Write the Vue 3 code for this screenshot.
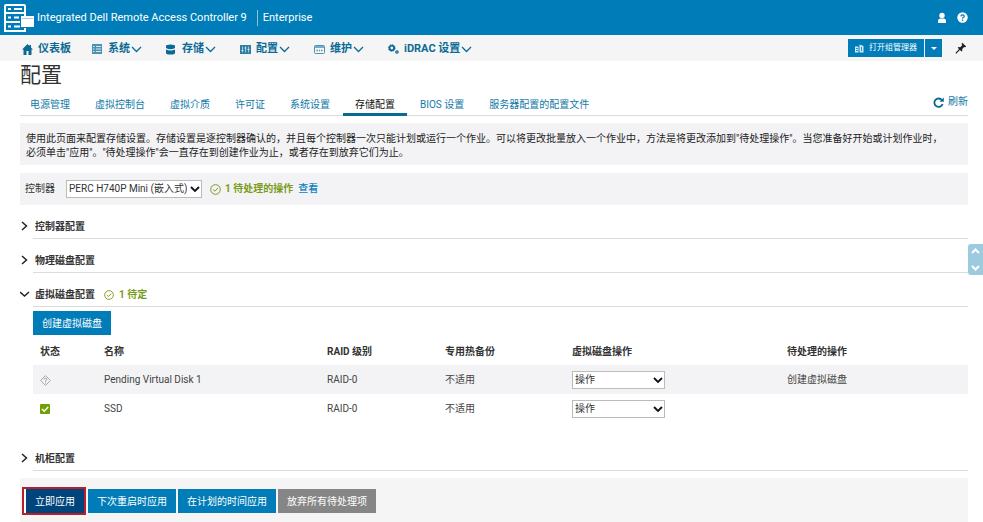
<script setup>
import { ref } from 'vue'

const navItems = [
  { id: 'home', label: '仪表板', menu: false },
  { id: 'system', label: '系统', menu: true },
  { id: 'storage', label: '存储', menu: true },
  { id: 'config', label: '配置', menu: true },
  { id: 'maintain', label: '维护', menu: true },
  { id: 'gears', label: 'iDRAC 设置', menu: true },
]

const tabs = [
  '电源管理', '虚拟控制台', '虚拟介质', '许可证', '系统设置',
  '存储配置', 'BIOS 设置', '服务器配置的配置文件',
]
const activeTab = ref('存储配置')

const disks = [
  { name: 'Pending Virtual Disk 1', raid: 'RAID-0', spare: '不适用', ok: false, pending: '创建虚拟磁盘' },
  { name: 'SSD', raid: 'RAID-0', spare: '不适用', ok: true, pending: '' },
]
</script>

<template>
  <div class="page">
    <header class="topbar">
      <svg class="logo" viewBox="0 0 30 28" aria-hidden="true">
        <g fill="none" stroke="#fff" stroke-width="2">
          <rect x="1" y="1" width="20" height="8" rx="1" />
          <path d="M21 12V9M1 9v9h15" />
          <path d="M1 18v9h20v-3M1 18h15" />
        </g>
        <path d="M4 5h3M10 5h8M4 13.500h3M10 13.500h5M4 22.500h3M10 22.500h6" stroke="#fff" stroke-width="2" />
        <rect x="17" y="12" width="13" height="11" fill="#fff" />
        <path d="M18 14.500h11" stroke="#9fd0e8" stroke-width="1" />
      </svg>
      <span class="product">Integrated Dell Remote Access Controller 9</span>
      <span class="edition">Enterprise</span>
      <div class="top-icons">
        <button type="button" class="plain" aria-label="用户">
          <svg width="10" height="12" viewBox="0 0 10 12" fill="#fff">
            <circle cx="5" cy="3.400" r="2.700" />
            <path d="M1 11V9.200Q1 6.600 3.500 6.600h3Q9 6.600 9 9.200V11z" />
          </svg>
        </button>
        <button type="button" class="plain" aria-label="帮助">
          <svg width="11" height="11" viewBox="0 0 11 11">
            <circle cx="5.500" cy="5.500" r="5.200" fill="#fff" />
            <path d="M3.900 4.400Q4 2.800 5.600 2.800T7.200 4.200Q7.200 5 6.200 5.500Q5.500 5.900 5.500 6.700" fill="none" stroke="#007db8" stroke-width="1.300" />
            <circle cx="5.500" cy="8.300" r=".8" fill="#007db8" />
          </svg>
        </button>
      </div>
    </header>

    <div class="navbar">
      <nav class="nav">
        <a v-for="item in navItems" :key="item.id" href="#" class="nav-item">
          <svg class="nav-icon" viewBox="0 0 11 11" aria-hidden="true">
            <path v-if="item.id === 'home'" fill="#0b6a94" d="M5.500 0L0 5.500h1.500V11h3V7h2v4h3V5.500H11L9 3.500V1H7.500v1z" />
            <g v-else-if="item.id === 'system'">
              <rect x="0" y="0" width="10" height="10" fill="#4c93b3" />
              <path d="M1 2.500h1.500M1 5h1.500M1 7.500h1.500M4 2.500h5M4 5h5M4 7.500h5" stroke="#fff" stroke-width=".8" />
            </g>
            <g v-else-if="item.id === 'storage'" fill="#0b6a94">
              <path d="M0 2Q0 .5 4.500 .5T9 2v2Q7 5.200 4.500 5.200T0 4z" />
              <path d="M0 5.400Q2 6.500 4.500 6.500T9 5.400V9q0 1.500-4.500 1.500T0 9z" />
            </g>
            <g v-else-if="item.id === 'config'">
              <rect x="0" y="1" width="11" height="9" fill="#2f7fa5" />
              <path d="M2.500 2.500v6M5.500 2.500v6M8.500 2.500v6" stroke="#b9d9e7" stroke-width=".8" />
              <path d="M1.500 6.500h2M4.500 4h2M7.500 5.500h2" stroke="#d8eaf2" />
            </g>
            <g v-else-if="item.id === 'maintain'" fill="none" stroke="#4c93b3">
              <rect x=".5" y="1.500" width="10" height="8" rx="1" />
              <path d="M1 3h9" stroke-width="1.500" />
              <path d="M2.500 6.500h1.500M5 6.500h1M7 6.500h1.500" stroke-width="1.500" />
            </g>
            <g v-else fill="none" stroke="#0b6a94">
              <circle cx="3.800" cy="4" r="2.300" stroke-width="1.800" />
              <circle cx="3.800" cy="4" r="3.300" stroke-width="1" stroke-dasharray="1.300 1.300" />
              <circle cx="9" cy="8" r="1.200" stroke-width="1.200" />
            </g>
          </svg>
          <span>{{ item.label }}</span>
          <svg v-if="item.menu" class="nav-caret" viewBox="0 0 11 7" aria-hidden="true">
            <path d="M1 1l4.500 4.500L10 1" fill="none" stroke="#0b6a94" stroke-width="1.300" />
          </svg>
        </a>
      </nav>
      <div class="nav-tools">
        <button type="button" class="group-btn">
          <svg width="9" height="9" viewBox="0 0 9 9" aria-hidden="true">
            <path d="M0 2.500h3.500v6H0zM4.500 .5L8.500 2v6.500h-4z" fill="#cfe8f3" />
            <path d="M1 4.500h2M1 6.500h2M6.500 3v4" stroke="#007db8" stroke-width=".8" />
          </svg>
          打开组管理器
        </button>
        <button type="button" class="group-more" aria-label="更多">
          <svg width="6" height="3" viewBox="0 0 6 3"><path d="M0 0h6L3 3z" fill="#fff" /></svg>
        </button>
        <button type="button" class="plain pin" aria-label="固定">
          <svg width="12" height="12" viewBox="0 0 12 12">
            <path d="M7.200 .8l4 3.800-1 .7-1-.2-2 2 .1 1.700-.8.700L2.700 5.800l.8-.8 1.800.2 2-2.200-.8-1.200z" fill="#222" />
            <path d="M5 7L.8 11.300" stroke="#222" stroke-width="1.100" />
          </svg>
        </button>
      </div>
    </div>

    <main class="content">
      <h1>配置</h1>
      <div class="tabbar">
        <a
          v-for="tab in tabs" :key="tab" href="#" class="tab"
          :class="{ active: tab === activeTab }" @click.prevent="activeTab = tab"
        >{{ tab }}</a>
        <a href="#" class="refresh">
          <svg width="11" height="11" viewBox="0 0 11 11" aria-hidden="true">
            <path d="M9 3.200A4.200 4.200 0 1 0 9.600 7" fill="none" stroke="#0b6a94" stroke-width="1.800" />
            <path d="M10.800 .6v4.200H6.600z" fill="#0b6a94" />
          </svg>
          刷新
        </a>
      </div>

      <p class="intro">使用此页面来配置存储设置。存储设置是逐控制器确认的，并且每个控制器一次只能计划或运行一个作业。可以将更改批量放入一个作业中，方法是将更改添加到"待处理操作"。当您准备好开始或计划作业时，必须单击"应用"。"待处理操作"会一直存在到创建作业为止，或者存在到放弃它们为止。</p>

      <div class="controller">
        <label for="controller">控制器</label>
        <span class="select wide">
          <select id="controller">
            <option>PERC H740P Mini (嵌入式)</option>
          </select>
          <svg viewBox="0 0 10 7" aria-hidden="true"><path d="M1 1l4 4 4-4" /></svg>
        </span>
        <svg class="check" viewBox="0 0 11 11" aria-hidden="true">
          <circle cx="5.500" cy="5.500" r="4.800" />
          <path d="M3.200 5.500l1.700 1.700 3-3.200" />
        </svg>
        <span class="pending">1 待处理的操作</span>
        <a href="#" class="view">查看</a>
      </div>

      <section class="section">
        <svg class="arrow" viewBox="0 0 10 10" aria-hidden="true"><path d="M2 1l4.500 4L2 9" /></svg>
        <h2>控制器配置</h2>
      </section>
      <section class="section">
        <svg class="arrow" viewBox="0 0 10 10" aria-hidden="true"><path d="M2 1l4.500 4L2 9" /></svg>
        <h2>物理磁盘配置</h2>
      </section>
      <section class="section">
        <svg class="arrow" viewBox="0 0 10 10" aria-hidden="true"><path d="M0 3l4.500 4L9 3" /></svg>
        <h2>
          虚拟磁盘配置
          <svg class="check small" viewBox="0 0 11 11" aria-hidden="true">
            <circle cx="5.500" cy="5.500" r="4.800" />
            <path d="M3.200 5.500l1.700 1.700 3-3.200" />
          </svg>
          <span class="count">1 待定</span>
        </h2>
      </section>

      <div class="disks">
        <button type="button" class="btn">创建虚拟磁盘</button>
        <table>
          <thead>
            <tr>
              <th class="c-state">状态</th>
              <th class="c-name">名称</th>
              <th class="c-raid">RAID 级别</th>
              <th class="c-spare">专用热备份</th>
              <th class="c-action">虚拟磁盘操作</th>
              <th>待处理的操作</th>
            </tr>
          </thead>
          <tbody>
            <tr v-for="disk in disks" :key="disk.name">
              <td>
                <svg v-if="disk.ok" class="state" viewBox="0 0 11 11" role="img" aria-label="正常">
                  <rect x="0" y="0" width="10" height="10" rx="1" fill="#6ea204" />
                  <path d="M2 5l2.200 2.200L8.200 3" fill="none" stroke="#fff" stroke-width="1.600" />
                </svg>
                <svg v-else class="state" viewBox="0 0 11 11" role="img" aria-label="未知">
                  <path d="M5.500 .6l4.900 4.900-4.900 4.900L.6 5.500z" fill="#f8f8f8" stroke="#a5a5a5" />
                  <path d="M4 4.500Q4.200 3.200 5.500 3.200T6.900 4.400Q6.800 5.200 5.500 5.800v1M5.500 7.500v1" fill="none" stroke="#999" />
                </svg>
              </td>
              <td>{{ disk.name }}</td>
              <td>{{ disk.raid }}</td>
              <td>{{ disk.spare }}</td>
              <td>
                <span class="select">
                  <select :aria-label="disk.name + ' 操作'"><option>操作</option></select>
                  <svg viewBox="0 0 10 7" aria-hidden="true"><path d="M1 1l4 4 4-4" /></svg>
                </span>
              </td>
              <td>{{ disk.pending }}</td>
            </tr>
          </tbody>
        </table>
      </div>

      <section class="section">
        <svg class="arrow" viewBox="0 0 10 10" aria-hidden="true"><path d="M2 1l4.500 4L2 9" /></svg>
        <h2>机柜配置</h2>
      </section>

      <footer class="actions">
        <span class="highlight"><button type="button" class="btn dark">立即应用</button></span>
        <button type="button" class="btn">下次重启时应用</button>
        <button type="button" class="btn">在计划的时间应用</button>
        <button type="button" class="btn gray">放弃所有待处理项</button>
      </footer>
    </main>

    <div class="side">
      <button type="button" class="plain" aria-label="向上">
        <svg width="9" height="6" viewBox="0 0 9 6"><path d="M1 5l3.500-3.500L8 5" /></svg>
      </button>
      <button type="button" class="plain" aria-label="向下">
        <svg width="9" height="6" viewBox="0 0 9 6"><path d="M1 1l3.500 3.500L8 1" /></svg>
      </button>
    </div>
  </div>
</template>

<style>
body {
  background: #fff;
}
</style>

<style scoped>
.page {
  position: relative;
  min-height: 100vh;
  font-family: Roboto, 'Noto Sans CJK SC', sans-serif;
  font-size: 10px;
  line-height: 14px;
  color: #333;
}
.page *,
.page {
  box-sizing: border-box;
}
a {
  color: #1079a8;
  text-decoration: none;
}
button,
select {
  font: inherit;
}
button {
  border: 0;
  cursor: pointer;
}
.plain {
  display: flex;
  padding: 0;
  background: none;
}

/* header */
.topbar {
  display: flex;
  align-items: center;
  height: 35px;
  padding: 0 15px 0 4px;
  background: #007db8;
  color: #fff;
  font-size: 11px;
  line-height: 16px;
}
.logo {
  width: 30px;
  height: 28px;
  margin-right: 3px;
}
.product {
  padding-right: 10px;
}
.edition {
  padding-left: 5px;
  border-left: 1px solid #8cc4de;
}
.top-icons {
  display: flex;
  align-items: center;
  gap: 10px;
  margin-left: auto;
}

/* main menu */
.navbar {
  display: flex;
  align-items: center;
  justify-content: space-between;
  height: 26px;
  padding: 0 16px 0 22px;
  background: #f5f5f6;
}
.nav {
  display: flex;
  gap: 21px;
}
.nav-item {
  display: flex;
  align-items: center;
  padding-top: 2px;
  color: #0b6a94;
  font-size: 11px;
  font-weight: 700;
}
.nav-icon {
  width: 11px;
  height: 11px;
  margin-right: 5px;
}
.nav-caret {
  width: 11px;
  height: 7px;
  margin: 0 3px 0 1px;
}
.nav-tools {
  display: flex;
  align-items: center;
}
.group-btn,
.group-more {
  display: flex;
  align-items: center;
  justify-content: center;
  height: 18px;
  background: #007db8;
  color: #fff;
}
.group-btn {
  gap: 5px;
  padding: 0 7px;
  font-size: 8px;
}
.group-more {
  width: 17px;
  margin-left: 1px;
  padding: 0;
}
.pin {
  margin-left: 13px;
}

/* page body */
.content {
  padding: 0 15px 0 20px;
}
h1 {
  margin: 0;
  font-size: 21px;
  font-weight: 400;
  line-height: 28px;
}
.tabbar {
  display: flex;
  align-items: flex-end;
  gap: 1px;
  height: 27px;
  border-bottom: 1px solid #dcdcdc;
}
.tab {
  padding: 0 12px;
  margin-bottom: -1px;
  border-bottom: 3px solid transparent;
  line-height: 16px;
}
.tab.active {
  border-color: #0b6a94;
  color: #111;
}
.tab:first-child {
  padding-left: 10px;
}
.refresh {
  display: flex;
  align-items: center;
  gap: 4px;
  margin-left: auto;
  padding-bottom: 6px;
}
.intro {
  margin: 7px 0 8px;
  padding: 9px 18px 5px 6px;
  background: #f3f3f5;
  color: #222;
}
.controller {
  display: flex;
  align-items: center;
  height: 32px;
  padding-left: 5px;
  background: #f3f3f5;
}

/* drop-downs */
.select {
  position: relative;
  display: block;
  width: 93px;
}
.select.wide {
  width: 136px;
  margin: 0 8px 0 11px;
}
.select select {
  appearance: none;
  display: block;
  width: 100%;
  height: 18px;
  padding: 0 14px 0 2px;
  border: 1px solid #bbb;
  border-radius: 0;
  background: #fff;
  color: #333;
}
.select svg {
  position: absolute;
  top: 6px;
  right: 2px;
  width: 10px;
  height: 7px;
  fill: none;
  stroke: #111;
  stroke-width: 1.8;
  pointer-events: none;
}

.check {
  width: 11px;
  height: 11px;
  fill: none;
  stroke: #7a9c1c;
  stroke-width: 1;
}
.check.small {
  width: 10px;
  height: 10px;
  margin-left: 9px;
}
.pending {
  margin: 0 5px 0 4px;
  color: #7a9c1c;
  font-weight: 700;
}
.view {
  color: #0a7fc0;
  font-weight: 500;
}

/* collapsible sections */
.section {
  display: flex;
  padding-top: 14px;
}
.arrow {
  width: 10px;
  height: 10px;
  margin: 2px 3px 0 0;
  fill: none;
  stroke: #222;
  stroke-width: 1.5;
}
h2 {
  display: flex;
  flex: 1;
  align-items: center;
  margin: 0;
  padding: 0 0 3px 2px;
  border-bottom: 1px solid #dcdcdc;
  font-size: 10px;
  font-weight: 700;
  line-height: 16px;
}
.count {
  margin-left: 5px;
  color: #7a9c1c;
}
.disks {
  padding: 4px 0 14px 13px;
}
.btn {
  display: block;
  height: 24px;
  padding: 2px 9px 0;
  background: #007db8;
  color: #fff;
}
.btn.dark {
  background: #00447c;
}
.btn.gray {
  background: #868686;
}

table {
  width: 100%;
  table-layout: fixed;
  border-collapse: collapse;
}
th,
td {
  height: 29px;
  padding: 1px 0 0 7px;
  text-align: left;
  vertical-align: middle;
}
th {
  height: 30px;
  padding-top: 4px;
}
td {
  color: #444;
}
.c-state {
  width: 64px;
}
.c-name {
  width: 223px;
}
.c-raid {
  width: 118px;
}
.c-spare {
  width: 127px;
}
.c-action {
  width: 215px;
}
tbody tr:nth-child(odd) {
  background: #f3f3f5;
}
.state {
  display: block;
  width: 11px;
  height: 11px;
}

.actions {
  display: flex;
  align-items: center;
  gap: 2px;
  height: 44px;
  margin-top: 7px;
  padding: 2px 0 0 2px;
  background: #f5f5f6;
}
.highlight {
  padding-left: 2px;
  border: 2px solid #b5202b;
  background: #fff;
}

/* scroll helper on the right edge */
.side {
  position: absolute;
  top: 244px;
  right: 0;
  display: flex;
  flex-direction: column;
  align-items: center;
  justify-content: space-between;
  width: 15px;
  height: 31px;
  padding: 4px 0;
  border-radius: 3px 0 0 3px;
  background: #9ccbe0;
}
.side path {
  fill: none;
  stroke: #fff;
  stroke-width: 2;
}
</style>
